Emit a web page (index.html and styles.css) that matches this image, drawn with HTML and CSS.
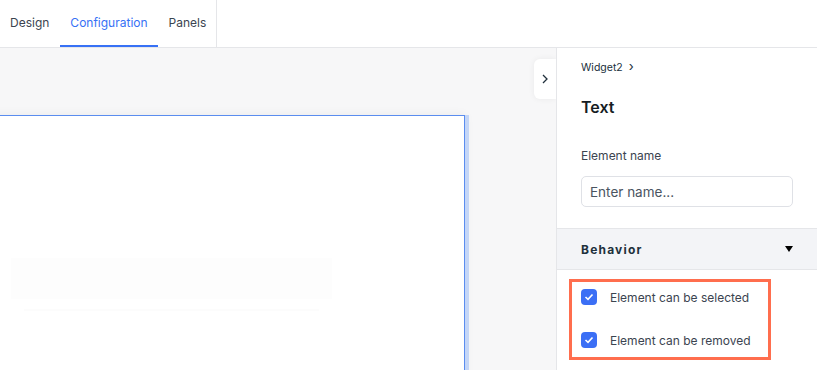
FILE: index.html
```html
<!DOCTYPE html>
<html lang="en">

<head>
  <meta charset="UTF-8" />
  <meta name="viewport" content="width=device-width, initial-scale=1.0" />
  <title>Widget configuration</title>
  <link rel="stylesheet" href="styles.css">
</head>

<body>
  <div class="topbar">
    <div class="tabs">
      <span class="tab">Design</span>
      <span class="tab active">Configuration</span>
      <span class="tab">Panels</span>
    </div>
  </div>
  <div class="main">
    <div class="canvas">
      <div class="stage">
        <div class="skeleton"></div>
        <div class="skeleton-line"></div>
      </div>
      <button class="collapse" type="button">
        <svg width="8" height="12" viewBox="0 0 8 12"><path d="M2 2l4 4-4 4" fill="none" stroke="#20303c" stroke-width="1.3"/></svg>
      </button>
    </div>
    <aside class="panel">
      <div class="crumb">Widget2 <span class="crumb-arrow">&#8250;</span></div>
      <h2 class="title">Text</h2>
      <label class="field-label" for="name">Element name</label>
      <input class="field" id="name" type="text" placeholder="Enter name...">
      <div class="section">
        <span>Behavior</span>
        <svg width="10" height="8" viewBox="0 0 10 8"><path d="M1 1h8L5 7z" fill="#000"/></svg>
      </div>
      <div class="options">
        <div class="highlight">
          <div class="option">
            <span class="check"><svg width="10" height="8" viewBox="0 0 10 8"><path d="M1.5 4l2.5 2.3L8.5 1.5" fill="none" stroke="#fff" stroke-width="1.6"/></svg></span>
            Element can be selected
          </div>
          <div class="option">
            <span class="check"><svg width="10" height="8" viewBox="0 0 10 8"><path d="M1.5 4l2.5 2.3L8.5 1.5" fill="none" stroke="#fff" stroke-width="1.6"/></svg></span>
            Element can be removed
          </div>
        </div>
      </div>
    </aside>
  </div>
</body>

</html>
```

FILE: styles.css
```css
body {
  margin: 0;
  font-family: Inter, "Noto Sans", sans-serif;
  color: #20303c;
  height: 370px;
  overflow: hidden;
}

.topbar {
  height: 47px;
  border-bottom: 1px solid #e5e6e9;
  display: flex;
}

.tabs {
  display: flex;
  width: 216px;
  border-right: 1px solid #e5e6e9;
}

.tab {
  font-size: 12px;
  color: #3b4450;
  padding: 0 10.5px;
  display: flex;
  align-items: center;
  border-bottom: 2px solid transparent;
}

.tab:first-child {
  padding-left: 10px;
}

.tab.active {
  color: #3771f5;
  border-bottom-color: #3771f5;
}

.main {
  display: flex;
  height: 322px;
}

.canvas {
  flex: 1;
  background: #f7f7f8;
  position: relative;
  overflow: hidden;
  padding-top: 67px;
}

.stage {
  margin-left: -12px;
  width: 477px;
  height: 300px;
  background: #fff;
  border: 1px solid #5b8def;
  box-shadow: 4px 0 0 #c4d6f7, 0 0 10px rgba(0, 0, 0, 0.06);
  padding: 142px 0 0 22px;
  box-sizing: border-box;
}

.skeleton {
  width: 321px;
  height: 41px;
  background: #fdfdfd;
}

.skeleton-line {
  width: 295px;
  height: 2px;
  margin: 10px 0 0 13px;
  background: #fcfcfc;
}

.collapse {
  position: absolute;
  right: 0;
  top: 11px;
  width: 22px;
  height: 40px;
  border: 0;
  border-radius: 6px 0 0 6px;
  background: #fff;
  box-shadow: 0 0 6px rgba(0, 0, 0, 0.06);
  padding: 0;
  display: flex;
  align-items: center;
  justify-content: center;
}

.panel {
  width: 260px;
  border-left: 1px solid #e5e6e9;
  background: #fff;
  display: flex;
  flex-direction: column;
}

.crumb {
  font-size: 10.5px;
  padding: 10px 24px 0;
  height: 14px;
}

.crumb-arrow {
  font-size: 13px;
  margin-left: 3px;
}

.title {
  font-size: 16px;
  font-weight: 600;
  margin: 25px 24px 0;
  height: 22px;
  color: #161d24;
}

.field-label {
  font-size: 12px;
  margin: 29px 24px 0;
  color: #3b4450;
}

.field {
  margin: 13px 24px 0;
  height: 31px;
  box-sizing: border-box;
  border: 1px solid #dfe1e6;
  border-radius: 5px;
  padding: 0 8px;
  font: inherit;
  font-size: 13.5px;
}

.field::placeholder {
  color: #4a5461;
}

.section {
  margin-top: 21px;
  height: 40px;
  background: #f3f4f7;
  border-top: 1px solid #e5e6e9;
  border-bottom: 1px solid #e5e6e9;
  display: flex;
  align-items: center;
  justify-content: space-between;
  padding: 0 23px 0 24px;
  font-size: 12px;
  font-weight: 700;
  letter-spacing: 1.2px;
  color: #20303c;
}

.options {
  padding: 9px 0 0 12px;
}

.highlight {
  width: 187px;
  border: 3px solid #ff6e4e;
  padding: 7px 0 9px 9px;
  display: flex;
  flex-direction: column;
  gap: 27px;
}

.option {
  display: flex;
  align-items: center;
  gap: 13px;
  font-size: 12px;
  color: #3b4450;
  height: 16px;
}

.check {
  width: 16px;
  height: 16px;
  border-radius: 4px;
  background: #3b6ff5;
  display: flex;
  align-items: center;
  justify-content: center;
}
```
